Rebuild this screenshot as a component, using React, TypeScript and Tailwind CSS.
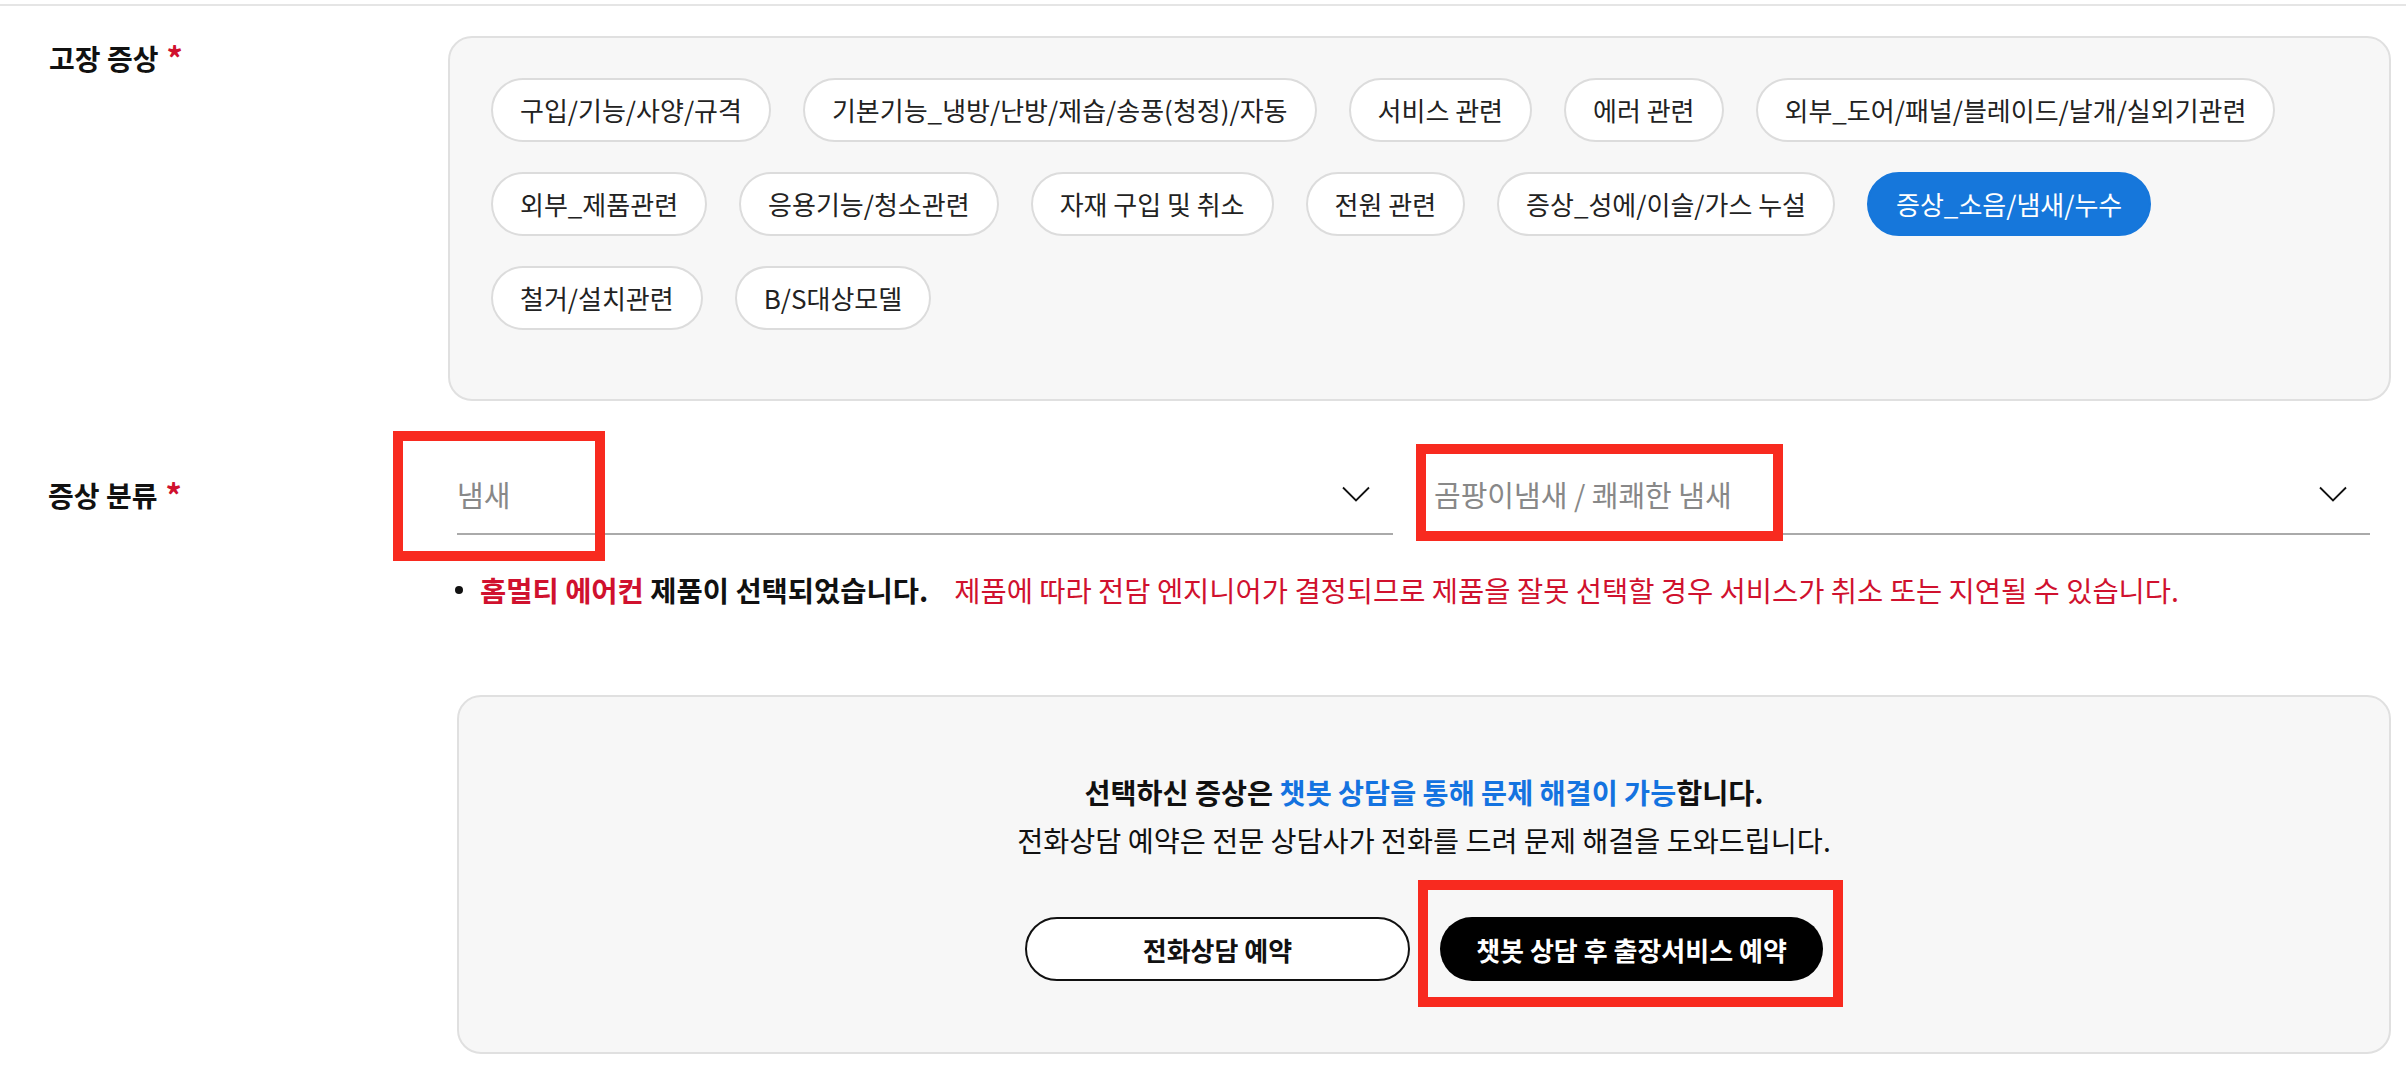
import React from "react";

const symptoms = [
  "구입/기능/사양/규격",
  "기본기능_냉방/난방/제습/송풍(청정)/자동",
  "서비스 관련",
  "에러 관련",
  "외부_도어/패널/블레이드/날개/실외기관련",
  "외부_제품관련",
  "응용기능/청소관련",
  "자재 구입 및 취소",
  "전원 관련",
  "증상_성에/이슬/가스 누설",
  "증상_소음/냄새/누수",
  "철거/설치관련",
  "B/S대상모델",
];

const selected = "증상_소음/냄새/누수";

function Chevron() {
  return (
    <svg width="28" height="16" viewBox="0 0 28 16" fill="none">
      <path d="M1 1.5 L14 14.5 L27 1.5" stroke="#111" strokeWidth="1.8" />
    </svg>
  );
}

function Label({ text }: { text: string }) {
  return (
    <div className="flex items-start text-[28px] font-bold leading-[36px] text-[#111]">
      {text}
      <span className="ml-[8px] text-[32px] leading-[34px] text-[#d0112e]">*</span>
    </div>
  );
}

function Select({ value }: { value: string }) {
  return (
    <div className="w-[936px] h-[80px] border-b-2 border-[#aaaaaa] flex items-center justify-between pr-[23px]">
      <span className="text-[29px] text-[#888888] leading-none">{value}</span>
      <Chevron />
    </div>
  );
}

export default function App() {
  return (
    <div className="relative w-[2406px] h-[1066px] overflow-hidden bg-white text-[#111] font-['Noto_Sans_CJK_KR','Noto_Sans',sans-serif]">
      <div className="mt-[4px] h-[2px] bg-[#e5e5e5]" />

      {/* 고장 증상 */}
      <div className="mt-[30px] flex">
        <div className="w-[448px] pl-[49px] pt-[4px]">
          <Label text="고장 증상" />
        </div>
        <div className="w-[1943px] rounded-[24px] border-2 border-[#e0e0e0] bg-[#f7f7f7] pt-[40px] pb-[69px] pl-[41px] pr-[41px] flex flex-wrap gap-x-[32px] gap-y-[30px]">
          {symptoms.map((s) => (
            <div
              key={s}
              className={
                s === selected
                  ? "h-[64px] px-[27px] rounded-full border-2 border-[#1677db] bg-[#1677db] text-white text-[26px] leading-none flex items-center"
                  : "h-[64px] px-[27px] rounded-full border-2 border-[#dcdcdc] bg-white text-[#222] text-[26px] leading-none flex items-center"
              }
            >
              {s}
            </div>
          ))}
        </div>
      </div>

      {/* 증상 분류 */}
      <div className="mt-[54px] flex items-center">
        <div className="w-[448px] pl-[48px]">
          <Label text="증상 분류" />
        </div>
        <div className="pl-[9px] flex gap-[41px]">
          <Select value="냄새" />
          <Select value="곰팡이냄새 / 쾌쾌한 냄새" />
        </div>
      </div>

      <div className="mt-[37px] pl-[455px] flex items-center text-[28.5px] leading-[36px]">
        <span className="w-[8px] h-[8px] rounded-full bg-[#111]" />
        <span className="ml-[17px] font-bold">
          <span className="text-[#d0112e]">홈멀티 에어컨</span> 제품이 선택되었습니다.
        </span>
        <span className="ml-[26px] text-[#d0112e]">
          제품에 따라 전담 엔지니어가 결정되므로 제품을 잘못 선택할 경우 서비스가 취소 또는 지연될 수 있습니다.
        </span>
      </div>

      {/* 안내 박스 */}
      <div className="mt-[87px] ml-[457px] w-[1934px] h-[359px] rounded-[24px] border-2 border-[#e0e0e0] bg-[#f7f7f7] pt-[71px] flex flex-col items-center">
        <p className="text-[28.3px] leading-[48px] font-bold">
          선택하신 증상은 <span className="text-[#1473e0]">챗봇 상담을 통해 문제 해결이 가능</span>합니다.
        </p>
        <p className="text-[28.3px] leading-[48px]">
          전화상담 예약은 전문 상담사가 전화를 드려 문제 해결을 도와드립니다.
        </p>
        <div className="mt-[53px] flex gap-[30px]">
          <button className="w-[385px] h-[64px] rounded-full border-2 border-[#111] bg-white text-[26px] font-bold text-[#111]">
            전화상담 예약
          </button>
          <button className="w-[383px] h-[64px] rounded-full bg-black text-[26px] font-bold text-white">
            챗봇 상담 후 출장서비스 예약
          </button>
        </div>
      </div>

      {/* 강조 표시 */}
      <div className="absolute left-[393px] top-[431px] w-[212px] h-[130px] border-[10px] border-[#f82a1f]" />
      <div className="absolute left-[1416px] top-[444px] w-[367px] h-[97px] border-[10px] border-[#f82a1f]" />
      <div className="absolute left-[1418px] top-[880px] w-[425px] h-[127px] border-[10px] border-[#f82a1f]" />
    </div>
  );
}
